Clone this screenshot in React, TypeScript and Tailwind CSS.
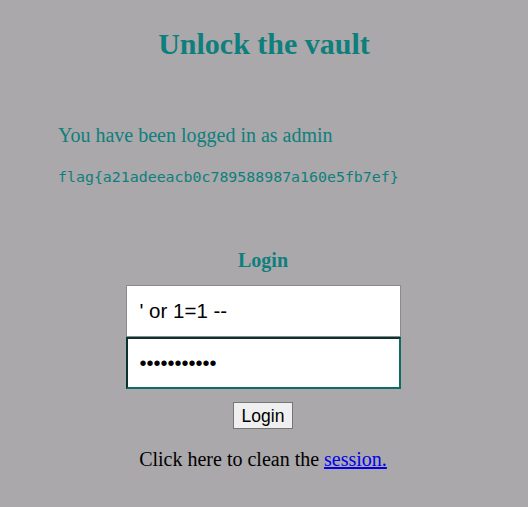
import React from 'react';

const App: React.FC = () => {
  return (
    <div className="min-h-[507px] w-[528px] bg-[#aaa8aa] font-['Liberation_Serif',serif] text-[#0e7f7d]">
      <h1 className="pt-[26px] text-center text-[30px] font-bold leading-[36px]">Unlock the vault</h1>

      <div className="mt-[61px] pl-[58px]">
        <p className="text-[20px] leading-[24px]">You have been logged in as admin</p>
        <p className="mt-[22px] font-['DejaVu_Sans_Mono',monospace] text-[14.9px] leading-[16px]">
          flag{'{'}a21adeeacb0c789588987a160e5fb7ef{'}'}
        </p>
      </div>

      <form className="mt-[63px] flex flex-col items-center pr-[2px]" onSubmit={(e) => e.preventDefault()}>
        <h2 className="text-[20px] font-bold leading-[24px]">Login</h2>
        <div className="mt-[13px] flex w-[275px] flex-col">
          <input
            type="text"
            defaultValue="' or 1=1 --"
            className="h-[52px] w-full border border-[#8a8a8a] bg-white px-[13px] font-['Liberation_Sans',sans-serif] text-[20.5px] text-black outline-none"
          />
          <input
            type="password"
            defaultValue="admin123456"
            className="h-[52px] w-full border-2 border-[#0d6b68] border-t-[#0a3330] border-l-[#0a3330] bg-white px-[12px] font-['Liberation_Sans',sans-serif] text-[20px] text-black outline-none"
          />
        </div>
        <button
          type="submit"
          className="mt-[13px] h-[27px] border border-[#767676] bg-[#efefef] px-[8px] font-['Liberation_Sans',sans-serif] text-[17.5px] leading-[22px] text-black"
        >
          Login
        </button>
        <p className="mt-[18px] text-[20px] leading-[24px] text-black">
          Click here to clean the{' '}
          <a href="#" className="text-[#0000ee] underline">session.</a>
        </p>
      </form>
    </div>
  );
};

export default App;
